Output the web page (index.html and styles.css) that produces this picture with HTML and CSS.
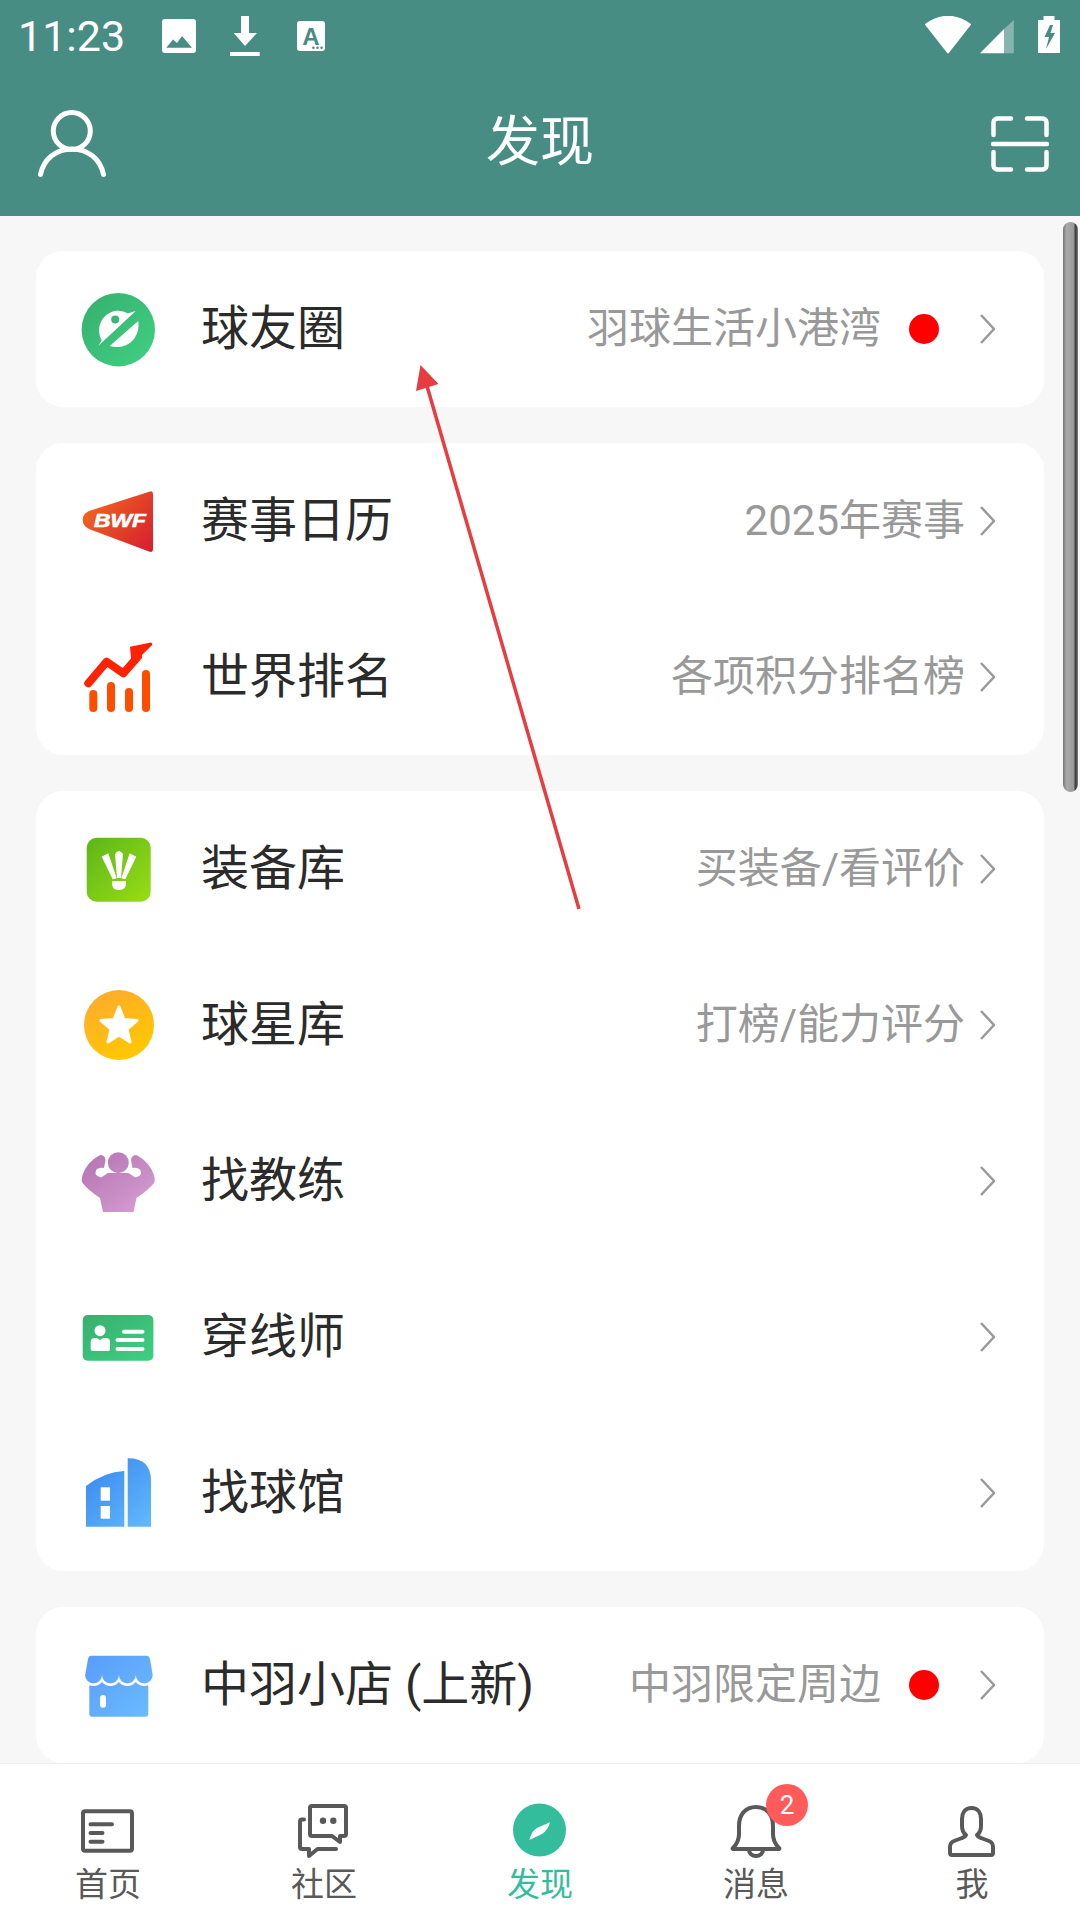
FILE: index.html
```html
<!DOCTYPE html>
<html lang="zh-CN">
<head>
    <meta charset="UTF-8">
    <meta name="viewport" content="width=device-width, initial-scale=1.0">
    <title>发现</title>
    <link rel="stylesheet" href="styles.css">
</head>
<body>
    <div class="screen">
        <header class="header">
            <div class="status-bar">
                <span class="time">11:23</span>
                <div class="status-left">
                    <svg class="status-icon" viewBox="0 0 40 40"><rect x="3" y="3" width="34" height="34" rx="3" fill="#fff"/><path d="M7.3 31.7 14 23.5 18 27 23 20 33 31.7Z" fill="#488d84"/></svg>
                    <svg class="status-icon" viewBox="0 0 40 40"><path d="M16 0h8v17h8L20 30 8.700 17H16Z" fill="#fff"/><rect x="5" y="36" width="29.700" height="4" fill="#fff"/></svg>
                    <svg class="status-icon" viewBox="0 0 40 40"><rect x="6" y="5" width="28" height="30" rx="3" fill="#fff"/><text x="20" y="29" class="status-a">A</text><circle cx="22.400" cy="31.700" r="1.300" fill="#488d84"/><circle cx="26.500" cy="31.700" r="1.300" fill="#488d84"/><circle cx="30.600" cy="31.700" r="1.300" fill="#488d84"/></svg>
                </div>
                <div class="status-right">
                    <svg class="status-wifi" viewBox="0 0 48 40"><path d="M2 8.500Q24 -7 46 8.500L24 36.500Z" fill="#fff" stroke="#fff" stroke-width="2" stroke-linejoin="round"/></svg>
                    <svg class="status-icon" viewBox="0 0 40 40"><path d="M3 37.300 27 13V37.300Z" fill="#fff"/><path d="M27 13 36.800 4V37.300H27Z" fill="#fff" opacity="0.35"/></svg>
                    <svg class="status-icon status-battery" viewBox="0 0 40 40"><path d="M14.500 0h11v4H31V37H9V4h5.500Z" fill="#fff"/><path d="M21 9 15.500 21H20L17 33 26 17H21.500L24 9Z" fill="#488d84"/></svg>
                </div>
            </div>
            <div class="nav-bar">
                <svg class="nav-user" viewBox="0 0 68 68" fill="none" stroke="#fff" stroke-width="5" stroke-linecap="round"><circle cx="33.800" cy="21" r="18.500"/><path d="M2.500 64.500C6 48 19 39 34 39 49 39 62 48 65.500 64.500"/></svg>
                <h1 class="nav-title">发现</h1>
                <svg class="nav-scan" viewBox="0 0 58 58" fill="none" stroke="#fff" stroke-width="4.500" stroke-linecap="round"><path d="M2.500 20V7.500a4 4 0 0 1 4-4H20M36 3.500H51.500a4 4 0 0 1 4 4V20M2 29H56M2.500 37V50.500a4 4 0 0 0 4 4H20M36 54.500H51.500a4 4 0 0 0 4-4V37"/></svg>
            </div>
        </header>

        <main class="content">
            <section class="card">
                <div class="row">
                    <svg class="row-icon" viewBox="0 0 76 76">
                        <defs><linearGradient id="gPlanet" x1="0" y1="0" x2="1" y2="1"><stop offset="0" stop-color="#37af6e"/><stop offset="1" stop-color="#3fd082"/></linearGradient></defs>
                        <circle cx="38.300" cy="38.700" r="36.700" fill="url(#gPlanet)"/>
                        <g transform="translate(1.700 2)">
                            <path d="M54 18 46 20.500C34 13 17 22 17.500 38 17.500 42 18.500 45 20 47L17 52.500Z" fill="#fff"/>
                            <path d="M56.500 28C59 44 46 58 28 53Z" fill="#fff"/>
                            <circle cx="33.500" cy="26.500" r="4" fill="#3ab873"/>
                        </g>
                    </svg>
                    <span class="row-label">球友圈</span>
                    <span class="row-sub">羽球生活小港湾</span>
                    <i class="dot"></i>
                    <svg class="chevron" viewBox="0 0 15 30"><path d="M1 1 14 15 1 29"/></svg>
                </div>
            </section>

            <section class="card">
                <div class="row">
                    <svg class="row-icon" viewBox="0 1 76 76">
                        <defs><linearGradient id="gBwf" x1="0" y1="0.2" x2="1" y2="0.9"><stop offset="0" stop-color="#f0691f"/><stop offset="1" stop-color="#d81f30"/></linearGradient></defs>
                        <path d="M70 9.500 9 29Q2.500 32 2.700 38 2.700 44 9 47L69 69.500Q73 71 73 67V12Q73 8.500 70 9.500Z" fill="url(#gBwf)"/>
                        <text x="14" y="45.300" class="bwf-text" textLength="52" lengthAdjust="spacingAndGlyphs">BWF</text>
                    </svg>
                    <span class="row-label">赛事日历</span>
                    <span class="row-sub">2025年赛事</span>
                    <svg class="chevron" viewBox="0 0 15 30"><path d="M1 1 14 15 1 29"/></svg>
                </div>
                <div class="row">
                    <svg class="row-icon" viewBox="0 1 76 76">
                        <g fill="none" stroke="#ff4d00" stroke-width="8" stroke-linecap="round"><path d="M13.300 56V70M31 48V70M49 54V70M66 36V70"/></g>
                        <path d="M8.300 45.300 26.700 23.700 43.300 35.300 58 18.700" fill="none" stroke="#ff2200" stroke-width="8" stroke-linecap="round" stroke-linejoin="round"/>
                        <path d="M50 8.700 71 4.500Q73 5 71.700 7.500L51.700 27Z" fill="#ff2200"/>
                    </svg>
                    <span class="row-label">世界排名</span>
                    <span class="row-sub">各项积分排名榜</span>
                    <svg class="chevron" viewBox="0 0 15 30"><path d="M1 1 14 15 1 29"/></svg>
                </div>
            </section>

            <section class="card">
                <div class="row">
                    <svg class="row-icon" viewBox="0 1 76 76">
                        <defs><linearGradient id="gShuttle" x1="0" y1="0" x2="1" y2="1"><stop offset="0" stop-color="#5bb51a"/><stop offset="1" stop-color="#9ade14"/></linearGradient></defs>
                        <rect x="6.700" y="7.700" width="64" height="64" rx="10" fill="url(#gShuttle)"/>
                        <path d="M35 24Q39 18 43 24L41 48H37ZM21.700 26.700 28.300 23.300 36.700 48.300 32.700 49.300ZM56.300 26.700 49.700 23.300 41.300 48.300 45.300 49.300ZM32 51H46Q47 60 39 60 31 60 32 51Z" fill="#fff"/>
                    </svg>
                    <span class="row-label">装备库</span>
                    <span class="row-sub">买装备/看评价</span>
                    <svg class="chevron" viewBox="0 0 15 30"><path d="M1 1 14 15 1 29"/></svg>
                </div>
                <div class="row">
                    <svg class="row-icon" viewBox="0 1 76 76">
                        <defs><linearGradient id="gStar" x1="0.200" y1="0" x2="0.700" y2="1"><stop offset="0" stop-color="#ffab2d"/><stop offset="1" stop-color="#ffc900"/></linearGradient></defs>
                        <circle cx="39" cy="39" r="35" fill="url(#gStar)"/>
                        <path d="M39 21 44 33.500 57 34.500 47 43 50 56 39 49 28 56 31 43 21 34.500 34 33.500Z" fill="#fff" stroke="#fff" stroke-width="3" stroke-linejoin="round"/>
                    </svg>
                    <span class="row-label">球星库</span>
                    <span class="row-sub">打榜/能力评分</span>
                    <svg class="chevron" viewBox="0 0 15 30"><path d="M1 1 14 15 1 29"/></svg>
                </div>
                <div class="row">
                    <svg class="row-icon" viewBox="0 1 76 76">
                        <defs><linearGradient id="gMuscle" gradientUnits="userSpaceOnUse" x1="15" y1="10" x2="62" y2="70"><stop offset="0" stop-color="#b676b3"/><stop offset="1" stop-color="#d59cd2"/></linearGradient></defs>
                        <circle cx="38.300" cy="20.700" r="10.500" fill="url(#gMuscle)"/>
                        <path d="M23 70 20 56Q8 48 2.500 41 1 38 2.500 33 7 20 20 13 25 13 25.500 18L24 26Q19 25 16 28L15.500 32Q18 36 22 35L28 31H48.500L54.500 35Q58.500 36 61 32L60.500 28Q57.500 25 52.500 26L51 18Q51.500 13 56.500 13 69.500 20 74 33 75.500 38 74 41 68.500 48 56.500 56L53.500 70Z" fill="url(#gMuscle)"/>
                    </svg>
                    <span class="row-label">找教练</span>
                    <svg class="chevron chevron-only" viewBox="0 0 15 30"><path d="M1 1 14 15 1 29"/></svg>
                </div>
                <div class="row">
                    <svg class="row-icon" viewBox="0 1 76 76">
                        <defs><linearGradient id="gCard" x1="0" y1="0" x2="1" y2="1"><stop offset="0" stop-color="#37af6e"/><stop offset="1" stop-color="#3fd082"/></linearGradient></defs>
                        <rect x="2.700" y="17" width="70.700" height="45.700" rx="5" fill="url(#gCard)"/>
                        <circle cx="20" cy="32.700" r="5.500" fill="#fff"/>
                        <path d="M10.700 44a4 4 0 0 1 4-4H17l3 2 3-2h3a4 4 0 0 1 4 4V51a2 2 0 0 1-2 2H12.700a2 2 0 0 1-2-2Z" fill="#fff"/>
                        <path d="M44 33.700H62.500M37.500 42H62.500M37.500 51H62.500" fill="none" stroke="#fff" stroke-width="4" stroke-linecap="round"/>
                    </svg>
                    <span class="row-label">穿线师</span>
                    <svg class="chevron chevron-only" viewBox="0 0 15 30"><path d="M1 1 14 15 1 29"/></svg>
                </div>
                <div class="row">
                    <svg class="row-icon" viewBox="0 2 76 76">
                        <defs><linearGradient id="gHall" gradientUnits="userSpaceOnUse" x1="10" y1="8" x2="68" y2="72"><stop offset="0" stop-color="#3a88ef"/><stop offset="1" stop-color="#60b8fb"/></linearGradient></defs>
                        <path d="M6 33Q24 19 44.300 18V73.700H6Z" fill="url(#gHall)"/>
                        <path d="M47.700 5.300Q71 5 71 28V73.700H47.700Z" fill="url(#gHall)"/>
                        <rect x="20.700" y="34.300" width="9.300" height="13.400" fill="#fff"/>
                        <rect x="20.700" y="53" width="9.300" height="12.700" fill="#fff"/>
                    </svg>
                    <span class="row-label">找球馆</span>
                    <svg class="chevron chevron-only" viewBox="0 0 15 30"><path d="M1 1 14 15 1 29"/></svg>
                </div>
            </section>

            <section class="card">
                <div class="row">
                    <svg class="row-icon" viewBox="0 1 76 76">
                        <defs><linearGradient id="gShop" gradientUnits="userSpaceOnUse" x1="10" y1="10" x2="68" y2="70"><stop offset="0" stop-color="#5a9dfb"/><stop offset="1" stop-color="#69bbfe"/></linearGradient></defs>
                        <rect x="9.300" y="30" width="59" height="40.700" rx="3" fill="url(#gShop)"/>
                        <path d="M11 9.700H66.700Q69 9.700 70 13L72.700 29A8.450 8.450 0 0 1 55.800 29 8.450 8.450 0 0 1 38.900 29 8.450 8.450 0 0 1 22 29 8.450 8.450 0 0 1 5.100 29L8 13Q9 9.700 11 9.700Z" fill="url(#gShop)" stroke="#fff" stroke-width="5" paint-order="stroke"/>
                        <rect x="20" y="49" width="6" height="12.700" rx="3" fill="#fff"/>
                    </svg>
                    <span class="row-label">中羽小店 (上新)</span>
                    <span class="row-sub">中羽限定周边</span>
                    <i class="dot"></i>
                    <svg class="chevron" viewBox="0 0 15 30"><path d="M1 1 14 15 1 29"/></svg>
                </div>
            </section>
        </main>

        <nav class="tab-bar">
            <div class="tab">
                <svg class="tab-icon" viewBox="0 0 60 60" fill="none" stroke="#595959" stroke-width="4" stroke-linecap="round" stroke-linejoin="round"><rect x="5" y="11.300" width="49" height="39.400" rx="2"/><path d="M12.500 24.300H34M12.500 33H24.500M12.500 41.700H24.500"/></svg>
                <span class="tab-label">首页</span>
            </div>
            <div class="tab">
                <svg class="tab-icon" viewBox="0 0 60 60" fill="none" stroke="#595959" stroke-width="4" stroke-linecap="round" stroke-linejoin="round"><path d="M18 6H50a2 2 0 0 1 2 2V34a2 2 0 0 1-2 2H46V42L38 36H18a2 2 0 0 1-2-2V8a2 2 0 0 1 2-2Z"/><path d="M10 19.500H8a2 2 0 0 0-2 2V47a2 2 0 0 0 2 2H15V56L23.500 49H42"/><circle cx="29" cy="20.700" r="3.200" fill="#595959" stroke="none"/><circle cx="39.300" cy="20.700" r="3.200" fill="#595959" stroke="none"/></svg>
                <span class="tab-label">社区</span>
            </div>
            <div class="tab tab-active">
                <svg class="tab-icon" viewBox="0 0 60 60"><circle cx="29.500" cy="30" r="26.500" fill="#34bd9c"/><path d="M19.300 40Q22 30 28 27.500L40 22.300Q38 30 32 34Z" fill="#fff"/></svg>
                <span class="tab-label">发现</span>
            </div>
            <div class="tab">
                <svg class="tab-icon" viewBox="0 0 60 60" fill="none" stroke="#595959" stroke-width="4" stroke-linejoin="round"><path d="M30 7C19 7 13 15 13 26V34Q13 42 7 48 6 49 8 49H52Q54 49 53 48 47 42 47 34V26C47 15 41 7 30 7Z"/><path d="M23 50a7 6 0 0 0 14 0"/></svg>
                <span class="tab-label">消息</span>
                <span class="badge">2</span>
            </div>
            <div class="tab">
                <svg class="tab-icon" viewBox="0 0 60 60" fill="none" stroke="#595959" stroke-width="4" stroke-linejoin="round"><path d="M29.500 8C23 8 20 13 20 19V26C20 30 21 33 24 35 23 37 20 38 20 38L12 41Q8 42.500 8 47V53Q8 55 10 55H49Q51 55 51 53V47Q51 42.500 47 41L39 38S36 37 35 35C38 33 39 30 39 26V19C39 13 36 8 29.500 8Z"/></svg>
                <span class="tab-label">我</span>
            </div>
        </nav>

        <div class="scroll-thumb"></div>

        <svg class="arrow" viewBox="0 0 1080 1920"><path d="M579 909 427 386" stroke="#e53d40" stroke-width="3.500" fill="none"/><path d="M420.500 365 416 391 438.500 384Z" fill="#e53d40"/></svg>
    </div>
</body>
</html>
```

FILE: styles.css
```css
* {
    box-sizing: border-box;
}

body {
    margin: 0;
    font-family: Roboto, 'Noto Sans CJK SC', sans-serif;
    color: #2b2b2b;
}

.screen {
    position: relative;
    display: flex;
    flex-direction: column;
    width: 1080px;
    height: 1920px;
    overflow: hidden;
    background-color: #f7f7f7;
}

.header {
    flex: none;
    height: 216px;
    color: #fff;
    background-color: #488d84;
}

.status-bar {
    display: flex;
    align-items: center;
    height: 72px;
    padding: 0 11px 0 18px;
}

.time {
    font-size: 43px;
    width: 141px;
}

.status-left {
    display: flex;
    gap: 26px;
}

.status-right {
    display: flex;
    align-items: center;
    margin-left: auto;
    gap: 5px;
}

.status-icon {
    width: 40px;
    height: 40px;
    overflow: visible;
}

.status-battery {
    margin-left: 7px;
}

.status-wifi {
    width: 48px;
    height: 40px;
}

.status-a {
    font: bold 24px 'Liberation Sans', sans-serif;
    fill: #488d84;
    text-anchor: middle;
}

.nav-bar {
    display: grid;
    grid-template-columns: 1fr auto 1fr;
    align-items: center;
    height: 144px;
    padding: 0 31px;
}

.nav-user {
    width: 68px;
    height: 68px;
    margin-left: 7px;
}

.nav-scan {
    justify-self: end;
    width: 58px;
    height: 58px;
}

.nav-title {
    margin: 0 0 3px 0;
    font-size: 54px;
    font-weight: 400;
    line-height: 72px;
}

.content {
    flex: 1;
    display: flex;
    flex-direction: column;
    gap: 36px;
    min-height: 0;
    padding: 35px 36px 0;
}

.card {
    flex: none;
    overflow: hidden;
    background-color: #fff;
    border-radius: 27px;
}

.row {
    display: flex;
    align-items: center;
    height: 156px;
    padding: 0 49px 0 44px;
}

.row-icon {
    flex: none;
    width: 76px;
    height: 76px;
    overflow: visible;
}

.bwf-text {
    font: italic bold 18px 'Liberation Sans', sans-serif;
    fill: #fff;
    stroke: #fff;
    stroke-width: 0.6;
}

.row-label {
    margin-left: 45px;
    font-size: 48px;
    line-height: 64px;
}

.row-sub {
    margin-left: auto;
    font-size: 42px;
    line-height: 56px;
    color: #999;
}

.dot {
    flex: none;
    width: 30px;
    height: 30px;
    margin: 0 26px 0 28px;
    border-radius: 50%;
    background-color: #f00;
}

.chevron {
    flex: none;
    width: 15px;
    height: 30px;
    margin-left: 15px;
    fill: none;
    stroke: #999;
    stroke-width: 2.5;
}

.chevron-only {
    margin-left: auto;
}

.tab-bar {
    flex: none;
    display: flex;
    height: 157px;
    padding-top: 36px;
    background-color: #fff;
    border-top: 1px solid #eee;
}

.tab {
    position: relative;
    display: flex;
    flex: 1;
    flex-direction: column;
    align-items: center;
    color: #595959;
}

.tab-active {
    color: #34bd9c;
}

.tab-icon {
    width: 60px;
    height: 60px;
}

.tab-label {
    margin-top: 6px;
    font-size: 33px;
    line-height: 38px;
}

.badge {
    position: absolute;
    top: -16px;
    left: 118px;
    width: 42px;
    height: 42px;
    border-radius: 50%;
    font-size: 26px;
    line-height: 42px;
    text-align: center;
    color: #fff;
    background-color: #ff5b5b;
}

.scroll-thumb {
    position: absolute;
    top: 222px;
    left: 1063px;
    width: 15px;
    height: 570px;
    border-radius: 8px;
    background: linear-gradient(to right, #777, #aaa 25%, #999 70%, #333 85%, #888);
}

.arrow {
    position: absolute;
    top: 0;
    left: 0;
    width: 1080px;
    height: 1920px;
    pointer-events: none;
}
```
